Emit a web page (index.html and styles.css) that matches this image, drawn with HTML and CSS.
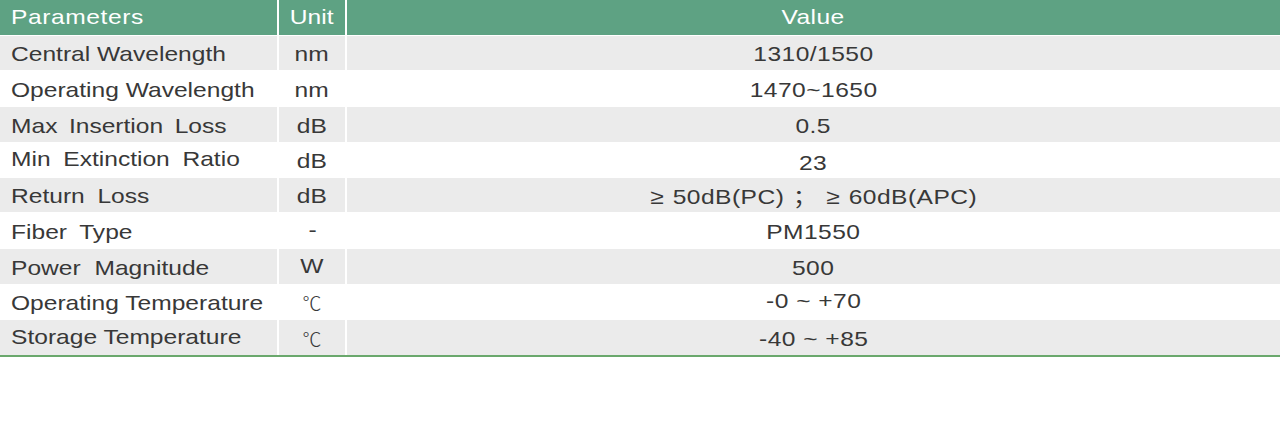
FILE: index.html
```html
<!DOCTYPE html>
<html lang="en">
<head>
<meta charset="utf-8">
<title>Parameters</title>
<link rel="stylesheet" href="styles.css">
</head>
<body>
<div class="spec">
  <div class="cell head left"><span class="t hd ls">Parameters</span></div>
  <div class="cell head"><span class="t hd">Unit</span></div>
  <div class="cell head val"><span class="t hd">Value</span></div>

  <div class="cell grey left"><span class="t">Central Wavelength</span></div>
  <div class="cell grey"><span class="t">nm</span></div>
  <div class="cell grey val"><span class="t">1310/1550</span></div>

  <div class="cell left"><span class="t">Operating Wavelength</span></div>
  <div class="cell"><span class="t">nm</span></div>
  <div class="cell val"><span class="t">1470~1650</span></div>

  <div class="cell grey left"><span class="t ws4">Max Insertion Loss</span></div>
  <div class="cell grey"><span class="t">dB</span></div>
  <div class="cell grey val"><span class="t">0.5</span></div>

  <div class="cell left up"><span class="t ws5">Min Extinction Ratio</span></div>
  <div class="cell"><span class="t">dB</span></div>
  <div class="cell down val"><span class="t">23</span></div>

  <div class="cell grey left"><span class="t ws5">Return Loss</span></div>
  <div class="cell grey"><span class="t">dB</span></div>
  <div class="cell grey val"><span class="t ws1">≥ 50dB(PC) <span class="fw">；</span> ≥ 60dB(APC)</span></div>

  <div class="cell left"><span class="t ws5">Fiber Type</span></div>
  <div class="cell up"><span class="t">-</span></div>
  <div class="cell val"><span class="t">PM1550</span></div>

  <div class="cell grey left"><span class="t ws6">Power Magnitude</span></div>
  <div class="cell grey up"><span class="t">W</span></div>
  <div class="cell grey val"><span class="t">500</span></div>

  <div class="cell left"><span class="t">Operating Temperature</span></div>
  <div class="cell"><span class="t deg">℃</span></div>
  <div class="cell up val"><span class="t">-0 ~ +70</span></div>

  <div class="cell grey left up"><span class="t">Storage Temperature</span></div>
  <div class="cell grey"><span class="t deg">℃</span></div>
  <div class="cell grey val"><span class="t">-40 ~ +85</span></div>
</div>
</body>
</html>
```

FILE: styles.css
```css
html, body {
  margin: 0;
  padding: 0;
  background: #ffffff;
}

.spec {
  display: grid;
  grid-template-columns: 277px 66px 1fr;
  grid-template-rows: 35px 34px 35px 35px 34px 34px 35px 35px 34px 35px;
  column-gap: 2px;
  row-gap: 1px;
  width: 1280px;
  border-bottom: 2px solid #6aa86c;
  font-family: "Liberation Sans", Arial, sans-serif;
  font-size: 21px;
  color: #383838;
}

.cell {
  display: flex;
  align-items: center;
  justify-content: center;
  background: #ffffff;
  white-space: nowrap;
  overflow: visible;
}

.cell.left {
  justify-content: flex-start;
  padding-left: 11px;
}

.cell.head {
  background: #5ea283;
  color: #ffffff;
}

.cell.grey {
  background: #ebebeb;
}

.t {
  display: inline-block;
  transform: scaleX(1.17);
  transform-origin: center;
  line-height: 1;
  padding-top: 1px;
}

.val .t {
  letter-spacing: 0.4px;
}

.t.hd {
  padding-top: 0;
  margin-top: -2px;
}

.left .t {
  transform-origin: left center;
}

.ls {
  letter-spacing: 0.5px;
}

.ws1 {
  word-spacing: 1px;
}

.ws4 {
  word-spacing: 4px;
}

.ws5 {
  word-spacing: 5px;
}

.ws6 {
  word-spacing: 6px;
}

.up .t {
  padding-top: 0;
  margin-top: -3px;
}

.down .t {
  padding-top: 4px;
}

.fw {
  font-family: "Noto Sans CJK SC", sans-serif;
}

.deg {
  font-family: "Noto Sans CJK SC", "DejaVu Sans", sans-serif;
  font-weight: 300;
  font-size: 19px;
  transform: none;
}
```
